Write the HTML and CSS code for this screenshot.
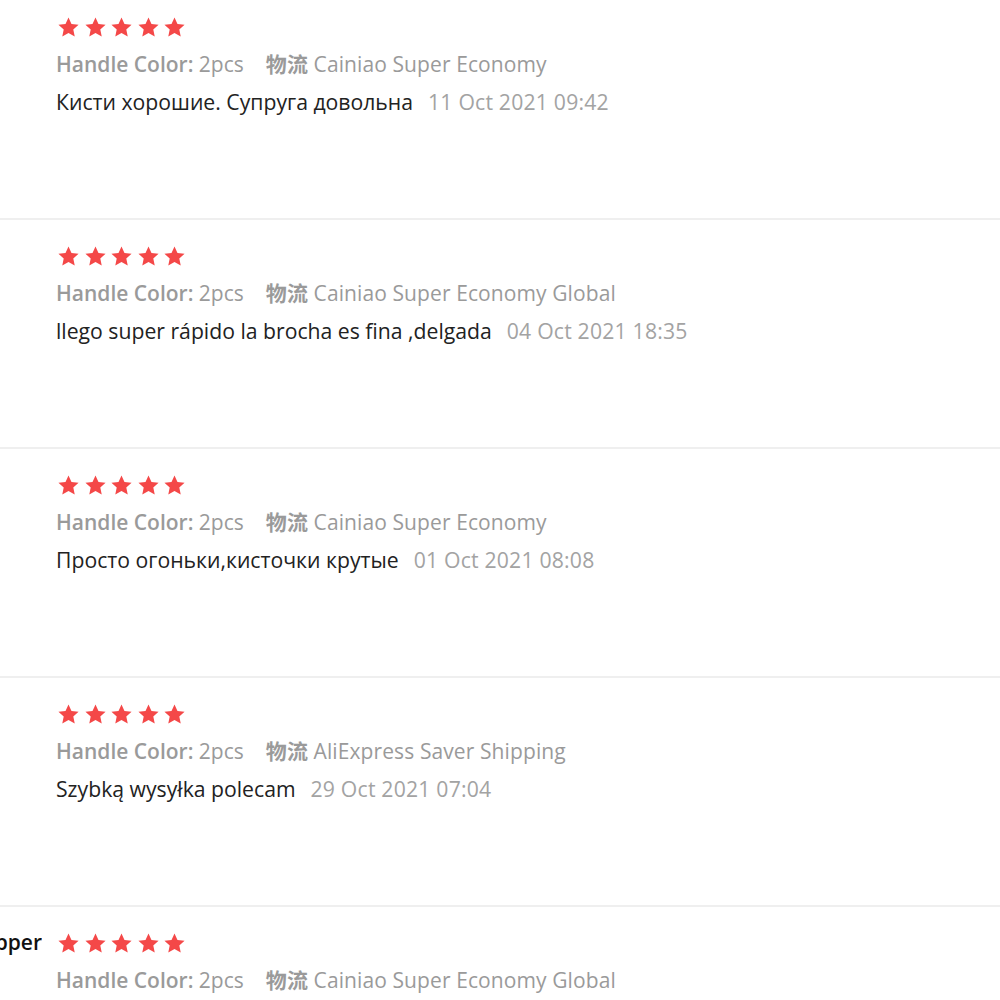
FILE: index.html
```html
<!DOCTYPE html>
<html>
<head>
<meta charset="utf-8">
<link rel="stylesheet" href="styles.css">
</head>
<body>
<div class="list">
  <div class="review">
    <div class="user"><span class="name"></span></div>
    <div class="content">
      <div class="stars">
        <svg viewBox="0 0 24 24"><polygon points="12,1.5 15.1,8.3 22.5,9.1 17,14.1 18.5,21.5 12,17.8 5.5,21.5 7,14.1 1.5,9.1 8.9,8.3"/></svg>
        <svg viewBox="0 0 24 24"><polygon points="12,1.5 15.1,8.3 22.5,9.1 17,14.1 18.5,21.5 12,17.8 5.5,21.5 7,14.1 1.5,9.1 8.9,8.3"/></svg>
        <svg viewBox="0 0 24 24"><polygon points="12,1.5 15.1,8.3 22.5,9.1 17,14.1 18.5,21.5 12,17.8 5.5,21.5 7,14.1 1.5,9.1 8.9,8.3"/></svg>
        <svg viewBox="0 0 24 24"><polygon points="12,1.5 15.1,8.3 22.5,9.1 17,14.1 18.5,21.5 12,17.8 5.5,21.5 7,14.1 1.5,9.1 8.9,8.3"/></svg>
        <svg viewBox="0 0 24 24"><polygon points="12,1.5 15.1,8.3 22.5,9.1 17,14.1 18.5,21.5 12,17.8 5.5,21.5 7,14.1 1.5,9.1 8.9,8.3"/></svg>
      </div>
      <div class="meta"><span class="sku"><b>Handle Color:</b> 2pcs</span><span class="ship"><b>物流</b> Cainiao Super Economy</span></div>
      <div class="text">Кисти хорошие. Супруга довольна<span class="date">11 Oct 2021 09:42</span></div>
    </div>
  </div>
  <div class="review">
    <div class="user"><span class="name"></span></div>
    <div class="content">
      <div class="stars">
        <svg viewBox="0 0 24 24"><polygon points="12,1.5 15.1,8.3 22.5,9.1 17,14.1 18.5,21.5 12,17.8 5.5,21.5 7,14.1 1.5,9.1 8.9,8.3"/></svg>
        <svg viewBox="0 0 24 24"><polygon points="12,1.5 15.1,8.3 22.5,9.1 17,14.1 18.5,21.5 12,17.8 5.5,21.5 7,14.1 1.5,9.1 8.9,8.3"/></svg>
        <svg viewBox="0 0 24 24"><polygon points="12,1.5 15.1,8.3 22.5,9.1 17,14.1 18.5,21.5 12,17.8 5.5,21.5 7,14.1 1.5,9.1 8.9,8.3"/></svg>
        <svg viewBox="0 0 24 24"><polygon points="12,1.5 15.1,8.3 22.5,9.1 17,14.1 18.5,21.5 12,17.8 5.5,21.5 7,14.1 1.5,9.1 8.9,8.3"/></svg>
        <svg viewBox="0 0 24 24"><polygon points="12,1.5 15.1,8.3 22.5,9.1 17,14.1 18.5,21.5 12,17.8 5.5,21.5 7,14.1 1.5,9.1 8.9,8.3"/></svg>
      </div>
      <div class="meta"><span class="sku"><b>Handle Color:</b> 2pcs</span><span class="ship"><b>物流</b> Cainiao Super Economy Global</span></div>
      <div class="text">llego super rápido la brocha es fina ,delgada<span class="date">04 Oct 2021 18:35</span></div>
    </div>
  </div>
  <div class="review">
    <div class="user"><span class="name"></span></div>
    <div class="content">
      <div class="stars">
        <svg viewBox="0 0 24 24"><polygon points="12,1.5 15.1,8.3 22.5,9.1 17,14.1 18.5,21.5 12,17.8 5.5,21.5 7,14.1 1.5,9.1 8.9,8.3"/></svg>
        <svg viewBox="0 0 24 24"><polygon points="12,1.5 15.1,8.3 22.5,9.1 17,14.1 18.5,21.5 12,17.8 5.5,21.5 7,14.1 1.5,9.1 8.9,8.3"/></svg>
        <svg viewBox="0 0 24 24"><polygon points="12,1.5 15.1,8.3 22.5,9.1 17,14.1 18.5,21.5 12,17.8 5.5,21.5 7,14.1 1.5,9.1 8.9,8.3"/></svg>
        <svg viewBox="0 0 24 24"><polygon points="12,1.5 15.1,8.3 22.5,9.1 17,14.1 18.5,21.5 12,17.8 5.5,21.5 7,14.1 1.5,9.1 8.9,8.3"/></svg>
        <svg viewBox="0 0 24 24"><polygon points="12,1.5 15.1,8.3 22.5,9.1 17,14.1 18.5,21.5 12,17.8 5.5,21.5 7,14.1 1.5,9.1 8.9,8.3"/></svg>
      </div>
      <div class="meta"><span class="sku"><b>Handle Color:</b> 2pcs</span><span class="ship"><b>物流</b> Cainiao Super Economy</span></div>
      <div class="text">Просто огоньки,кисточки крутые<span class="date">01 Oct 2021 08:08</span></div>
    </div>
  </div>
  <div class="review">
    <div class="user"><span class="name"></span></div>
    <div class="content">
      <div class="stars">
        <svg viewBox="0 0 24 24"><polygon points="12,1.5 15.1,8.3 22.5,9.1 17,14.1 18.5,21.5 12,17.8 5.5,21.5 7,14.1 1.5,9.1 8.9,8.3"/></svg>
        <svg viewBox="0 0 24 24"><polygon points="12,1.5 15.1,8.3 22.5,9.1 17,14.1 18.5,21.5 12,17.8 5.5,21.5 7,14.1 1.5,9.1 8.9,8.3"/></svg>
        <svg viewBox="0 0 24 24"><polygon points="12,1.5 15.1,8.3 22.5,9.1 17,14.1 18.5,21.5 12,17.8 5.5,21.5 7,14.1 1.5,9.1 8.9,8.3"/></svg>
        <svg viewBox="0 0 24 24"><polygon points="12,1.5 15.1,8.3 22.5,9.1 17,14.1 18.5,21.5 12,17.8 5.5,21.5 7,14.1 1.5,9.1 8.9,8.3"/></svg>
        <svg viewBox="0 0 24 24"><polygon points="12,1.5 15.1,8.3 22.5,9.1 17,14.1 18.5,21.5 12,17.8 5.5,21.5 7,14.1 1.5,9.1 8.9,8.3"/></svg>
      </div>
      <div class="meta"><span class="sku"><b>Handle Color:</b> 2pcs</span><span class="ship"><b>物流</b> AliExpress Saver Shipping</span></div>
      <div class="text">Szybką wysyłka polecam<span class="date">29 Oct 2021 07:04</span></div>
    </div>
  </div>
  <div class="review">
    <div class="user"><span class="name">Shopper</span></div>
    <div class="content">
      <div class="stars">
        <svg viewBox="0 0 24 24"><polygon points="12,1.5 15.1,8.3 22.5,9.1 17,14.1 18.5,21.5 12,17.8 5.5,21.5 7,14.1 1.5,9.1 8.9,8.3"/></svg>
        <svg viewBox="0 0 24 24"><polygon points="12,1.5 15.1,8.3 22.5,9.1 17,14.1 18.5,21.5 12,17.8 5.5,21.5 7,14.1 1.5,9.1 8.9,8.3"/></svg>
        <svg viewBox="0 0 24 24"><polygon points="12,1.5 15.1,8.3 22.5,9.1 17,14.1 18.5,21.5 12,17.8 5.5,21.5 7,14.1 1.5,9.1 8.9,8.3"/></svg>
        <svg viewBox="0 0 24 24"><polygon points="12,1.5 15.1,8.3 22.5,9.1 17,14.1 18.5,21.5 12,17.8 5.5,21.5 7,14.1 1.5,9.1 8.9,8.3"/></svg>
        <svg viewBox="0 0 24 24"><polygon points="12,1.5 15.1,8.3 22.5,9.1 17,14.1 18.5,21.5 12,17.8 5.5,21.5 7,14.1 1.5,9.1 8.9,8.3"/></svg>
      </div>
      <div class="meta"><span class="sku"><b>Handle Color:</b> 2pcs</span><span class="ship"><b>物流</b> Cainiao Super Economy Global</span></div>
      <div class="text">Хорошие кисти<span class="date">28 Oct 2021 12:10</span></div>
    </div>
  </div>
</div>
</body>
</html>
```

FILE: styles.css
```css
html, body {
  margin: 0;
  padding: 0;
  background: #fff;
  overflow: hidden;
}
body {
  font-family: "Open Sans", "Noto Sans CJK SC", sans-serif;
  width: 1000px;
  height: 1000px;
}
.list {
  margin-top: -9px;
}
.review {
  display: flex;
  height: 227px;
  border-bottom: 2px solid #efefef;
  box-sizing: content-box;
}
.user {
  width: 42px;
  flex: none;
  display: flex;
  justify-content: flex-end;
  overflow: hidden;
  padding-top: 20px;
  margin-right: 14px;
}
.name {
  white-space: nowrap;
  font-size: 21px;
  font-weight: 600;
  color: #111;
  line-height: 30px;
}
.content {
  flex: 1;
  padding-top: 24px;
}
.stars {
  display: flex;
  gap: 3.5px;
  height: 24px;
  align-items: center;
  padding-left: 1px;
}
.stars svg {
  width: 23px;
  height: 23px;
  fill: #f44848;
}
.meta {
  margin-top: 10px;
  font-size: 21px;
  line-height: 30px;
  color: #9a9a9a;
  white-space: nowrap;
}
.meta b {
  font-weight: 600;
}
.ship {
  margin-left: 22px;
  letter-spacing: 0.1px;
}
.text {
  margin-top: 8px;
  font-size: 21.2px;
  line-height: 30px;
  color: #222;
  white-space: nowrap;
}
.date {
  margin-left: 15px;
  color: #a3a3a3;
  letter-spacing: 0.2px;
}
```
